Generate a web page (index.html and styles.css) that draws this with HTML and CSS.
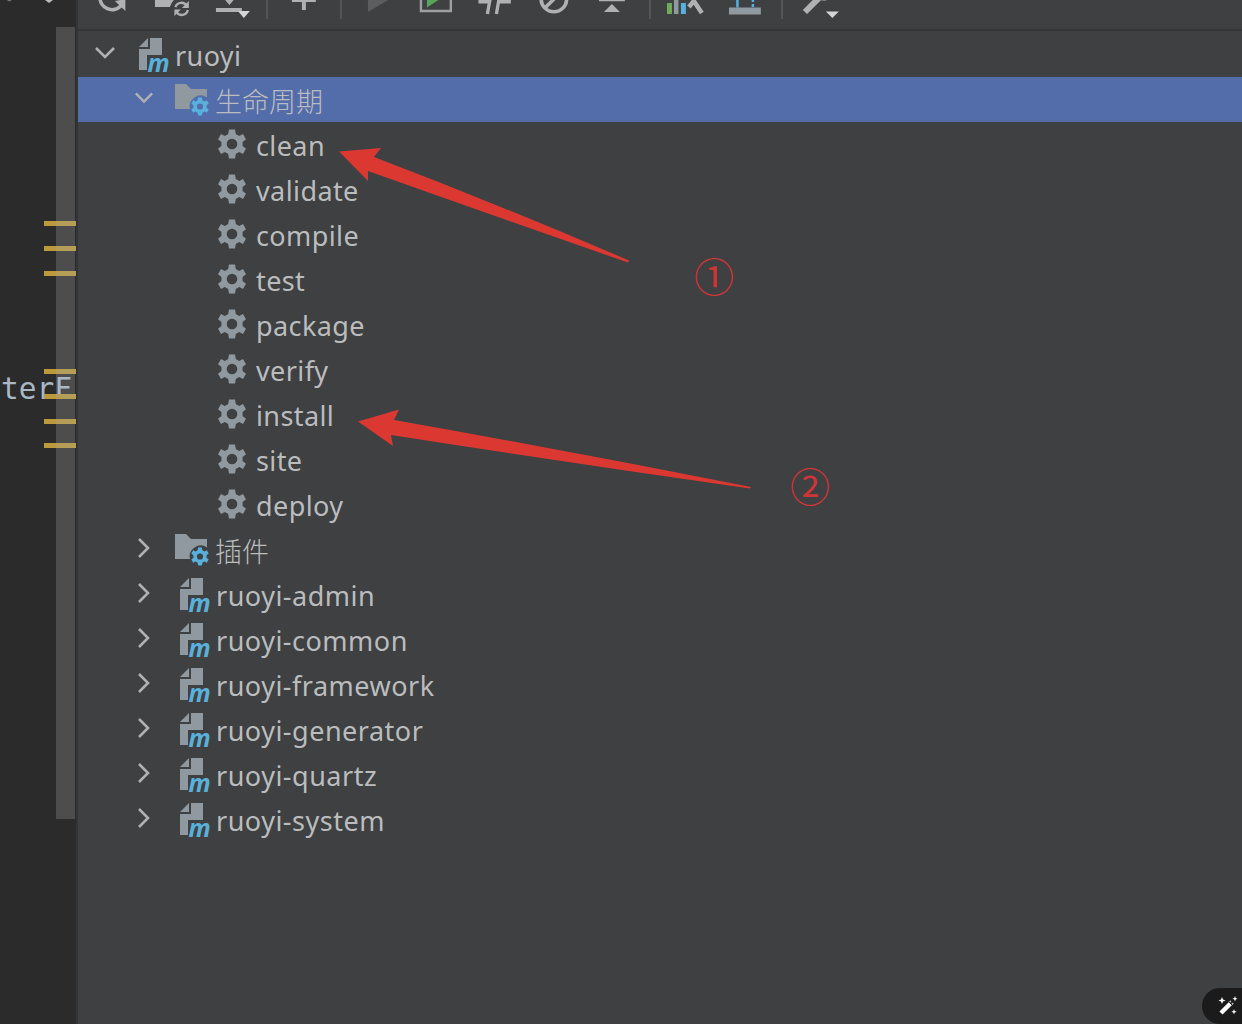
FILE: index.html
```
<!DOCTYPE html>
<html lang="zh-CN">
<head>
    <meta charset="UTF-8">
    <meta name="viewport" content="width=device-width, initial-scale=1.0">
    <title>Maven</title>
    <link rel="stylesheet" href="styles.css">
</head>
<body>
    <!-- shared icons -->
    <svg class="sprite">
        <symbol id="down" viewBox="0 0 22 14"><path d="M2 2L11 11L20 2" fill="none" stroke="#afb1b3" stroke-width="2.6"/></symbol>
        <symbol id="right" viewBox="0 0 14 22"><path d="M2 2L11 11L2 20" fill="none" stroke="#afb1b3" stroke-width="2.6"/></symbol>
        <symbol id="module" viewBox="0 0 32 36">
            <path d="M1 10L10 1V10Z" fill="#8f999f"/>
            <path d="M12 1H24V18H9V33H1V12H12Z" fill="#8f999f"/>
            <text class="m" x="9.5" y="34.5">m</text>
        </symbol>
        <symbol id="cog" viewBox="-15 -15 30 30">
            <g fill="#8f999f">
                <path fill-rule="evenodd" d="M-3 -14.5H3L3.8 -10L7.2 -8L11 -10L14 -4.8L10.6 -2V2L14 4.8L11 10L7.2 8L3.8 10L3 14.5H-3L-3.8 10L-7.2 8L-11 10L-14 4.8L-10.6 2V-2L-14 -4.8L-11 -10L-7.2 -8L-3.8 -10ZM5.3 0A5.3 5.3 0 1 0 -5.3 0A5.3 5.3 0 1 0 5.3 0Z"/>
            </g>
        </symbol>
        <symbol id="folder" viewBox="0 0 36 34">
            <path d="M1 1H12L17 6H33V14.5A11 11 0 0 0 16 26H1Z" fill="#8f999f"/>
            <g transform="translate(26 23.5) scale(.62)" fill="#59b0dc">
                <path fill-rule="evenodd" d="M-3 -14.5H3L3.8 -10L7.2 -8L11 -10L14 -4.8L10.6 -2V2L14 4.8L11 10L7.2 8L3.8 10L3 14.5H-3L-3.8 10L-7.2 8L-11 10L-14 4.8L-10.6 2V-2L-14 -4.8L-11 -10L-7.2 -8L-3.8 -10ZM5 0A5 5 0 1 0 -5 0A5 5 0 1 0 5 0Z"/>
            </g>
        </symbol>
    </svg>

    <div class="window">
        <div class="editor">
            <svg class="tab-bits" viewBox="0 0 76 8"><path d="M7 0H12L9 1.5Z" fill="#777"/><path d="M45 0H53L49 3Z" fill="#bbb"/></svg>
            <div class="scrollbar"></div>
            <div class="code">terF</div>
            <div class="marks top-marks"><i></i><i></i><i></i></div>
            <div class="marks low-marks"><i></i><i></i><i></i><i></i></div>
        </div>

        <div class="panel">
            <div class="toolbar">
                <svg viewBox="0 0 59 29"><path d="M17 -3A12.300 12.300 0 0 0 38 6" fill="none" stroke="#afb1b3" stroke-width="3.6"/><path d="M42.500 -1V11L32 1Z" fill="#afb1b3"/></svg>
                <svg viewBox="0 0 59 29"><path d="M13 -6H32V0Q29 3 28 7H13Z" fill="#afb1b3"/><path d="M33.5 7A6.3 6.3 0 0 1 45 6M46 10A6.3 6.3 0 0 1 34.5 12" fill="none" stroke="#afb1b3" stroke-width="2.3"/><path d="M47 1V8H40ZM32.500 16V9.500H39Z" fill="#afb1b3"/></svg>
                <svg viewBox="0 0 59 29"><path d="M15 8H41V12H15Z" fill="#afb1b3"/><path d="M20 -5H37L28.500 5Z" fill="#afb1b3"/><path d="M37 11H49L43 18Z" fill="#d5d5d5"/></svg>
                <span class="sep"></span>
                <svg viewBox="0 0 59 29"><path d="M18 0H42M30 -12V10" stroke="#afb1b3" stroke-width="4"/></svg>
                <span class="sep"></span>
                <svg viewBox="0 0 59 29"><path d="M20 -14L42 -1L20 12Z" fill="#5b5d5e"/></svg>
                <svg viewBox="0 0 59 29"><path d="M14 -12H44V11H14Z" fill="none" stroke="#9da0a2" stroke-width="2.4"/><path d="M20 -8L33 -1L20 7.500Z" fill="#57a55b"/></svg>
                <svg viewBox="0 0 59 29"><path d="M12.500 1.500H24M33 1.500H45" stroke="#afb1b3" stroke-width="4"/><path d="M25 -6L21.500 14M34 -6L30.500 14" stroke="#afb1b3" stroke-width="3.300"/></svg>
                <svg viewBox="0 0 59 29"><circle cx="29" cy="-1" r="12.800" fill="none" stroke="#afb1b3" stroke-width="3.600"/><path d="M20 8L38 -10" stroke="#afb1b3" stroke-width="3.600"/></svg>
                <svg viewBox="0 0 59 29"><path d="M16 0H42" stroke="#afb1b3" stroke-width="2.400"/><path d="M21 12H37L29 4Z" fill="#afb1b3"/></svg>
                <span class="sep"></span>
                <svg viewBox="0 0 59 29"><path d="M10 3H15V14H10Z" fill="#6cad55"/><path d="M17 -4H21.500V14H17Z" fill="#8f999f"/><path d="M24 3H29V14H24Z" fill="#59b0dc"/><path d="M32 7L37 1L45 13" fill="none" stroke="#afb1b3" stroke-width="4.500"/></svg>
                <svg viewBox="0 0 59 29"><path d="M13 7.500H45V14.500H13Z" fill="#8f999f"/><path d="M21.500 -2V7.500" stroke="#59b0dc" stroke-width="2.500"/><path d="M37 -1V7" stroke="#59b0dc" stroke-width="2.500" stroke-dasharray="3 2"/></svg>
                <span class="sep"></span>
                <svg viewBox="0 0 59 29"><path d="M15 12L30 -3" stroke="#afb1b3" stroke-width="6"/><path d="M27 -2Q34 3 41 -2Z" fill="#afb1b3"/><path d="M36 11.500H49L42.500 18Z" fill="#d5d5d5"/></svg>
            </div>

            <div class="tree">
                <div class="row root"><svg class="arrow"><use href="#down"/></svg><svg class="module"><use href="#module"/></svg><span>ruoyi</span></div>
                <div class="row group selected"><svg class="arrow"><use href="#down"/></svg><svg class="folder"><use href="#folder"/></svg><span class="cn">生命周期</span></div>
                <div class="row goal"><svg class="cog"><use href="#cog"/></svg><span>clean</span></div>
                <div class="row goal"><svg class="cog"><use href="#cog"/></svg><span>validate</span></div>
                <div class="row goal"><svg class="cog"><use href="#cog"/></svg><span>compile</span></div>
                <div class="row goal"><svg class="cog"><use href="#cog"/></svg><span>test</span></div>
                <div class="row goal"><svg class="cog"><use href="#cog"/></svg><span>package</span></div>
                <div class="row goal"><svg class="cog"><use href="#cog"/></svg><span>verify</span></div>
                <div class="row goal"><svg class="cog"><use href="#cog"/></svg><span>install</span></div>
                <div class="row goal"><svg class="cog"><use href="#cog"/></svg><span>site</span></div>
                <div class="row goal"><svg class="cog"><use href="#cog"/></svg><span>deploy</span></div>
                <div class="row group"><svg class="arrow"><use href="#right"/></svg><svg class="folder"><use href="#folder"/></svg><span class="cn">插件</span></div>
                <div class="row group"><svg class="arrow"><use href="#right"/></svg><svg class="module"><use href="#module"/></svg><span>ruoyi-admin</span></div>
                <div class="row group"><svg class="arrow"><use href="#right"/></svg><svg class="module"><use href="#module"/></svg><span>ruoyi-common</span></div>
                <div class="row group"><svg class="arrow"><use href="#right"/></svg><svg class="module"><use href="#module"/></svg><span>ruoyi-framework</span></div>
                <div class="row group"><svg class="arrow"><use href="#right"/></svg><svg class="module"><use href="#module"/></svg><span>ruoyi-generator</span></div>
                <div class="row group"><svg class="arrow"><use href="#right"/></svg><svg class="module"><use href="#module"/></svg><span>ruoyi-quartz</span></div>
                <div class="row group"><svg class="arrow"><use href="#right"/></svg><svg class="module"><use href="#module"/></svg><span>ruoyi-system</span></div>
            </div>
        </div>

        <!-- arrows and step numbers over the tree -->
        <svg class="notes" viewBox="0 0 1242 1024">
            <path d="M339 151.500L381 148L374 157Q500 205 629 260.500L628 262.500Q500 218 368 171L368 181Z"/>
            <path d="M358 421.500L399 409.500L394 420Q570 451 751 487L750 488.500Q570 463 391 435L393 446Z"/>
        </svg>
        <span class="step step-1">①</span>
        <span class="step step-2">②</span>

        <div class="wand">
            <svg viewBox="0 0 20 20"><path d="M3 17L14 6" stroke="#fff" stroke-width="4.500"/><path d="M11 6L14 9" stroke="#1b1b1b" stroke-width="1"/><circle cx="13.500" cy="6.500" r="1.200" fill="#1b1b1b"/><path d="M4 1L5 3.500L7.500 4.500L5 5.500L4 8L3 5.500L.5 4.500L3 3.500ZM17 0L17.700 2L19.500 2.700L17.700 3.400L17 5.400L16.300 3.400L14.500 2.700L16.300 2ZM16 13L16.700 15L18.700 15.700L16.700 16.400L16 18.400L15.300 16.400L13.300 15.700L15.300 15Z" fill="#fff"/></svg>
        </div>
    </div>
</body>
</html>
```
FILE: styles.css
```
body {
    margin: 0;
    padding: 0;
    overflow: hidden;
    background-color: #3e4042;
    font-family: "Noto Sans", "Noto Sans CJK SC", sans-serif;
}

.sprite {
    position: absolute;
    width: 0;
    height: 0;
}

.window {
    position: relative;
    display: flex;
    width: 1242px;
    height: 1024px;
    overflow: hidden;
}

/* editor strip */
.editor {
    position: relative;
    flex: none;
    box-sizing: border-box;
    width: 78px;
    border-right: 2px solid #323435;
    background-color: #2b2b2b;
}

.tab-bits {
    display: block;
    width: 76px;
    height: 8px;
}

.code {
    position: absolute;
    top: 369px;
    left: 1px;
    font: 29.500px/40px "DejaVu Sans Mono", monospace;
    color: #a9b7c6;
}

.scrollbar {
    position: absolute;
    top: 27px;
    right: 1px;
    width: 19px;
    height: 792px;
    background-color: rgba(106, 106, 106, 0.55);
}

.marks {
    position: absolute;
    right: 0;
    display: flex;
    flex-direction: column;
    gap: 19.800px;
}

.marks i {
    width: 32px;
    height: 5px;
    background: linear-gradient(90deg, #bb9a3c 12px, #b59e57 12px);
}

.top-marks {
    top: 221px;
}

.low-marks {
    top: 369px;
}

/* maven panel */
.panel {
    flex: 1;
}

.toolbar {
    display: flex;
    height: 29px;
    padding-left: 5px;
    border-bottom: 2px solid #333536;
}

.toolbar svg {
    flex: none;
    width: 58.800px;
    height: 29px;
}

.sep {
    flex: none;
    width: 2px;
    height: 19px;
    margin: 0 6.500px;
    background-color: #535557;
}

.tree {
    padding-top: 1px;
}

.row {
    display: flex;
    align-items: center;
    height: 45px;
    color: #bbbcbd;
    font-size: 27px;
    line-height: 45px;
    letter-spacing: 0.4px;
    white-space: nowrap;
}

.row span {
    padding-top: 2px;
}

.selected {
    background-color: #536dab;
}

.root {
    padding-left: 16px;
}

.group {
    padding-left: 56px;
    letter-spacing: 0.5px;
}

.goal {
    padding-left: 139px;
}

.arrow {
    width: 22px;
    height: 22px;
    margin-bottom: 3px;
}

.group .arrow {
    width: 20px;
}

.module {
    width: 32px;
    height: 36px;
    margin-left: 22px;
    margin-right: 5px;
    overflow: visible;
}

.group .module {
    margin-left: 25px;
}

.folder {
    width: 36px;
    height: 34px;
    margin-left: 20px;
    margin-right: 5px;
}

.cog {
    width: 30px;
    height: 30px;
    margin-right: 9px;
    margin-bottom: 1px;
}

.row .cn {
    font-family: "Noto Sans CJK SC", sans-serif;
    font-weight: 300;
    letter-spacing: 0;
}

.m {
    font: italic bold 24.500px "Open Sans", sans-serif;
    letter-spacing: 0;
    fill: #59b0dc;
}

/* annotations */
.notes {
    position: absolute;
    top: 0;
    left: 0;
    width: 1242px;
    height: 1024px;
    fill: #dc3832;
}

.step {
    position: absolute;
    font: 40px/40px "Noto Sans CJK SC", sans-serif;
    color: #d03436;
}

.step-1 {
    top: 255px;
    left: 694px;
}

.step-2 {
    top: 465px;
    left: 790px;
}

.wand {
    position: absolute;
    top: 988px;
    left: 1202px;
    display: flex;
    align-items: center;
    box-sizing: border-box;
    width: 60px;
    height: 36px;
    padding-left: 16px;
    border-radius: 18px;
    background-color: #1b1b1b;
}

.wand svg {
    width: 20px;
    height: 20px;
}
```
